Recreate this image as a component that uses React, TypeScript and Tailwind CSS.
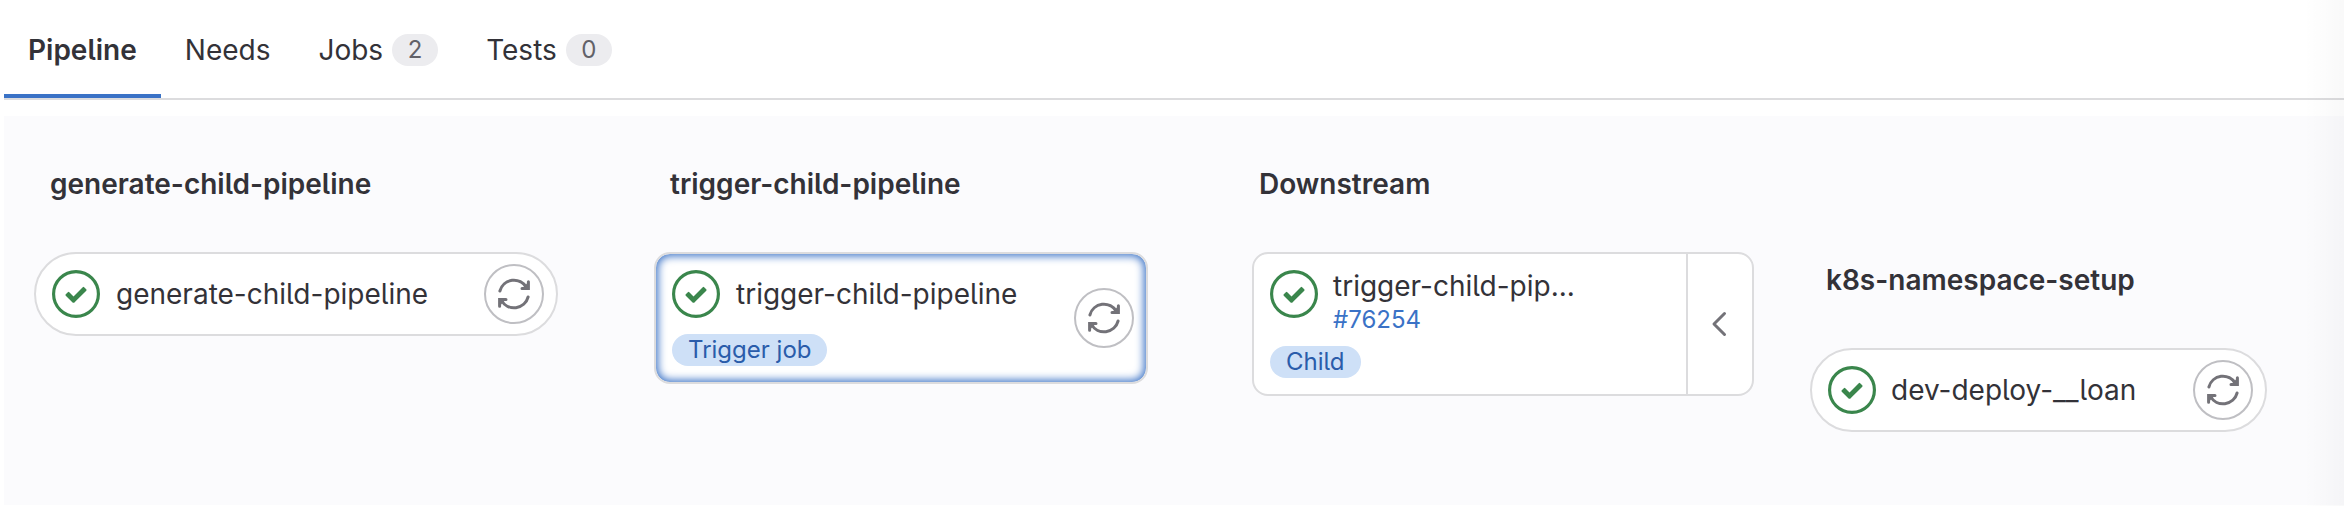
import type { ReactNode } from "react";

const FONT =
  "font-['Inter','Liberation_Sans',sans-serif] [font-feature-settings:'cv05'_1,'ss03'_1]";

function StatusSuccess() {
  return (
    <svg viewBox="0 0 14 14" className="size-12 shrink-0" fill="#3a864c">
      <circle cx="7" cy="7" r="6.54" fill="#fff" stroke="#3a864c" strokeWidth="0.92" />
      <path d="M6.278 7.697L5.045 6.464a.296.296 0 0 0-.42-.002l-.613.614a.298.298 0 0 0 .002.42l1.91 1.909a.5.5 0 0 0 .703.005l.265-.265L9.997 6.04a.291.291 0 0 0-.009-.408l-.614-.614a.29.29 0 0 0-.408-.009L6.278 7.697z" />
    </svg>
  );
}

function RetryButton() {
  return (
    <button className="flex size-[60px] shrink-0 items-center justify-center rounded-full border-2 border-[#bfbfc3] bg-white">
      <svg
        viewBox="0 0 32 32"
        className="size-8"
        fill="none"
        stroke="#737278"
        strokeWidth="3"
        strokeLinecap="round"
      >
        <path d="M1.900 13A14.500 14.500 0 0 1 28.500 9.500" />
        <path d="M30.500 3.700V10.700H24Z" fill="#737278" stroke="none" />
        <path d="M30.400 3.800V10.600H24" />
        <path d="M30.100 19A14.500 14.500 0 0 1 3.500 22.500" />
        <path d="M1.500 28.300V21.300H8Z" fill="#737278" stroke="none" />
        <path d="M1.600 28.200V21.400H8" />
      </svg>
    </button>
  );
}

function Tab({ label, count, active }: { label: string; count?: number; active?: boolean }) {
  return (
    <div
      className={
        active
          ? "flex h-[98px] items-start border-b-4 border-[#3a72c6] px-6 pt-8 font-semibold"
          : "flex h-[98px] items-start px-6 pt-8"
      }
    >
      <span className="leading-9">{label}</span>
      {count !== undefined && (
        <span className="mt-0.5 ml-[9px] flex h-8 w-[46px] items-center justify-center rounded-full bg-[#ececef] text-2xl text-[#626168]">
          {count}
        </span>
      )}
    </div>
  );
}

function StageTitle({ children }: { children: ReactNode }) {
  return <h2 className="leading-9 font-semibold">{children}</h2>;
}

function Badge({ children }: { children: ReactNode }) {
  return (
    <span className="flex h-8 w-fit items-center rounded-full bg-[#cee0f7] px-4 text-2xl text-[#2a5caa]">
      {children}
    </span>
  );
}

export default function App() {
  return (
    <div className={`flex h-[506px] w-[2344px] overflow-hidden bg-white pl-1 text-[28px] text-[#333238] ${FONT}`}>
      <div className="relative flex grow flex-col">
        <nav className="flex h-[100px] shrink-0 border-b-2 border-[#dcdcde]">
          <Tab label="Pipeline" active />
          <Tab label="Needs" />
          <Tab label="Jobs" count={2} />
          <Tab label="Tests" count={0} />
        </nav>
        <main className="mt-4 mb-px flex grow items-start bg-[#fbfbfd]">
          <section className="mt-[50px] ml-[30px] w-[524px]">
            <div className="pl-4"><StageTitle>generate-child-pipeline</StageTitle></div>
            <div className="mt-[50px] flex h-[84px] items-center rounded-full border-2 border-[#dcdcde] bg-white pr-3 pl-4">
              <StatusSuccess />
              <span className="ml-4 grow">generate-child-pipeline</span>
              <RetryButton />
            </div>
          </section>

          <section className="mt-[50px] ml-24 w-[494px]">
            <div className="pl-4"><StageTitle>trigger-child-pipeline</StageTitle></div>
            <div className="mt-[50px] flex h-[132px] items-center rounded-2xl border-2 border-[#dcdcde] bg-white pr-3 pl-4 shadow-[inset_0_0_8px_2px_#3a72c6]">
              <div className="flex grow flex-col gap-4">
                <div className="flex items-center">
                  <StatusSuccess />
                  <span className="ml-4">trigger-child-pipeline</span>
                </div>
                <Badge>Trigger job</Badge>
              </div>
              <RetryButton />
            </div>
          </section>

          <section className="mt-[50px] ml-[104px] w-[502px]">
            <div className="pl-[7px]"><StageTitle>Downstream</StageTitle></div>
            <div className="mt-[50px] flex h-36 rounded-2xl border-2 border-[#dcdcde] bg-white">
              <div className="grow pt-4 pl-4">
                <div className="flex">
                  <StatusSuccess />
                  <div className="ml-[15px] flex flex-col">
                    <span className="leading-8">trigger-child-pip...</span>
                    <a className="text-2xl leading-9 text-[#3a72c6]">#76254</a>
                  </div>
                </div>
                <div className="mt-2"><Badge>Child</Badge></div>
              </div>
              <button className="flex w-[66px] items-center justify-center border-l-2 border-[#dcdcde]">
                <svg viewBox="0 0 32 32" className="size-8" fill="none" stroke="#737278" strokeWidth="3" strokeLinecap="round" strokeLinejoin="round">
                  <path d="M20.500 5.500L10 16L20.500 26.500" />
                </svg>
              </button>
            </div>
          </section>

          <section className="mt-[146px] ml-14 w-[457px]">
            <div className="pl-4"><StageTitle>k8s-namespace-setup</StageTitle></div>
            <div className="mt-[50px] flex h-[84px] items-center rounded-full border-2 border-[#dcdcde] bg-white pr-3 pl-4">
              <StatusSuccess />
              <span className="ml-[15px] grow">dev-deploy-__loan</span>
              <RetryButton />
            </div>
          </section>
        </main>
        <div className="absolute inset-y-0 right-0 w-10 bg-linear-to-l from-black/[0.025] to-transparent" />
      </div>
    </div>
  );
}
